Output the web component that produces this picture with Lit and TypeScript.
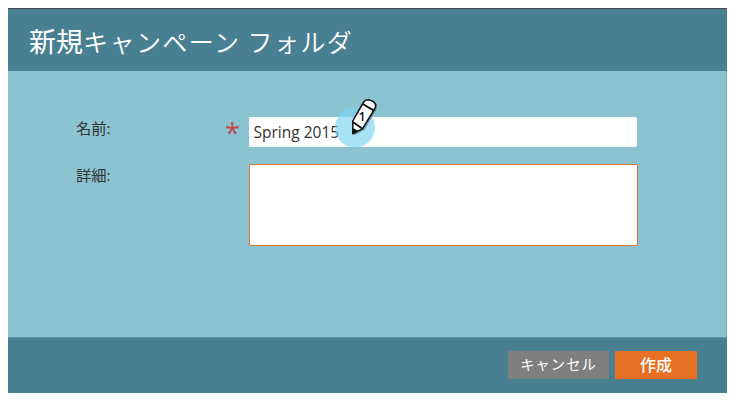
import { LitElement, html, css } from "lit";
import { customElement } from "lit/decorators.js";

@customElement("step-marker")
class StepMarker extends LitElement {
  static styles = css`
    :host { display: block; width: 46px; height: 52px; }
    svg { display: block; }
    text { font: 600 12.5px "Open Sans", sans-serif; }
  `;
  render() {
    return html`<svg width="46" height="52" viewBox="0 0 46 52">
      <circle cx="20" cy="31.5" r="20" fill="#7fd2ee" fill-opacity=".67" />
      <g transform="translate(1.4 1.2)" opacity=".28">
        <path d="M17.8 38V25L28.8 6Q30 3 34 3.3Q40 4.5 40.6 8Q41 10 39.5 13L28 33Z" />
      </g>
      <path d="M17.8 37.6V24.8L28.7 6Q30 3.8 33 3.8Q39 4.8 40.6 8.6Q41 10.5 39.3 13.5L27.6 32.7Z"
        fill="#fff" stroke="#111" stroke-width="1.5" stroke-linejoin="round" />
      <path d="M27.7 8L39 14.6M17.8 26L27.2 32.6" fill="none" stroke="#111" stroke-width="1.8" />
      <path d="M17.8 32.5L22.8 35.2L17.8 38Z" fill="#111" stroke="#111" />
      <text x="27" y="25.2" text-anchor="middle" fill="#111">1</text>
    </svg>`;
  }
}

@customElement("app-root")
class AppRoot extends LitElement {
  static styles = css`
    :host {
      display: block; box-sizing: border-box; width: 735px; height: 405px;
      padding: 8px 8px 12px; background: #fff; color: #333;
      font-family: "Open Sans", "Noto Sans CJK JP", sans-serif;
    }
    * { box-sizing: border-box; }
    .dialog { display: flex; flex-direction: column; width: 719px; height: 385px; background: #498091; border-top: 1px solid #454c50; }
    header { height: 62px; padding: 1px 0 0 21px; display: flex; align-items: center; color: #fff; white-space: pre; }
    h1 { margin: 0; font: 400 27px/40px "Noto Sans CJK JP", sans-serif; }
    .kana { font-weight: 350; font-size: 25px; letter-spacing: 1.45px; }
    main {
      height: 266px; background: #8bc3d0; border-right: 1px solid #70aebf;
      padding: 46px 0 0 68px; display: flex; flex-direction: column; gap: 17px;
    }
    .row { display: grid; grid-template-columns: 149px 24px 389px; align-items: start; }
    label { font: 400 15.3px/22px "Open Sans", "Noto Sans CJK JP", sans-serif; }
    .star { font: 400 27px/32px "Open Sans", sans-serif; color: #c0494f; height: 30px; }
    .field { position: relative; width: 388px; height: 30px; padding: 0 4.5px; background: #fff; border-radius: 2px; font-size: 15.5px; line-height: 31px; }
    .area { width: 389px; height: 82px; background: #fff; border: 1px solid #dc7434; border-radius: 2px; }
    step-marker { position: absolute; left: 86px; top: -21px; }
    footer { flex: 1; border-top: 1px solid #5b95a7; padding: 13px 30px 0 0; display: flex; justify-content: flex-end; gap: 6px; }
    button { border: 0; padding: 0 0 2px; height: 28px; color: #fff; font: 500 15px/26px "Noto Sans CJK JP", sans-serif; }
    .cancel { width: 101px; background: #7f7f7f; font-weight: 400; font-size: 14.3px; letter-spacing: 1px; }
    .create { width: 82px; background: #e77024; font-size: 16px; }
  `;
  render() {
    return html`<div class="dialog">
      <header><h1>新規<span class="kana">キャンペーン フォルダ</span></h1></header>
      <main>
        <div class="row">
          <label>名前:</label><span class="star">*</span>
          <div class="field">Spring 2015<step-marker></step-marker></div>
        </div>
        <div class="row">
          <label>詳細:</label><span></span>
          <div class="area"></div>
        </div>
      </main>
      <footer>
        <button class="cancel">キャンセル</button>
        <button class="create">作成</button>
      </footer>
    </div>`;
  }
}
